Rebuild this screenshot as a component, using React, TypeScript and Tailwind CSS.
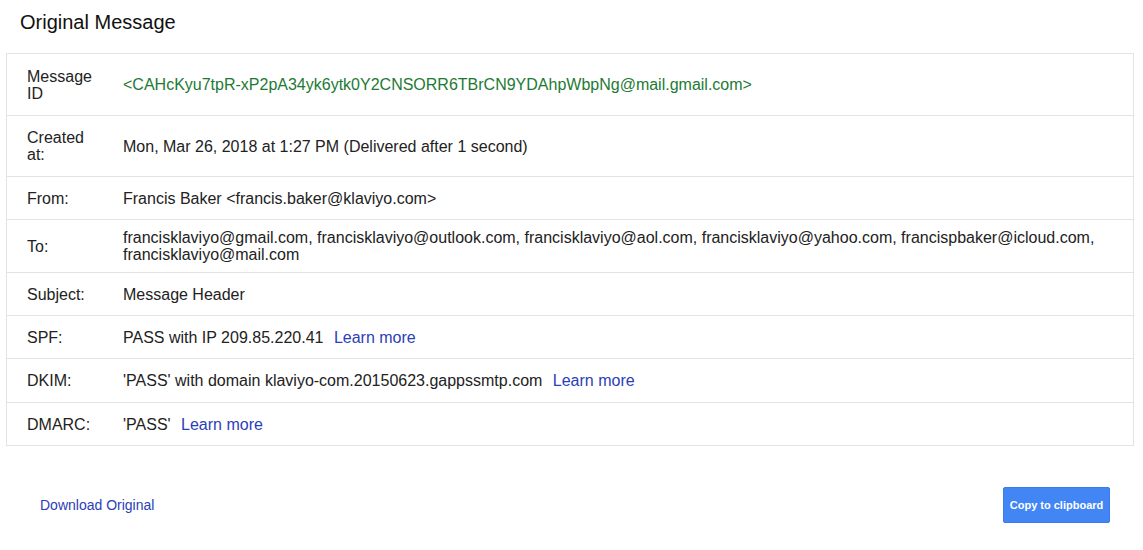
function Learn() {
  return <a href="#" className="ml-[6px] text-[#2b40b8]">Learn more</a>;
}

export default function App() {
  const data = [
    {
      label: "Message ID",
      h: "h-[62px]",
      value: <span className="text-[#1d7a34]">&lt;CAHcKyu7tpR-xP2pA34yk6ytk0Y2CNSORR6TBrCN9YDAhpWbpNg@mail.gmail.com&gt;</span>,
    },
    { label: "Created at:", h: "h-[61px]", value: "Mon, Mar 26, 2018 at 1:27 PM (Delivered after 1 second)" },
    { label: "From:", h: "h-[43px]", value: "Francis Baker <francis.baker@klaviyo.com>" },
    {
      label: "To:",
      h: "h-[53px]",
      value:
        "francisklaviyo@gmail.com, francisklaviyo@outlook.com, francisklaviyo@aol.com, francisklaviyo@yahoo.com, francispbaker@icloud.com, francisklaviyo@mail.com",
    },
    { label: "Subject:", h: "h-[43px]", value: "Message Header" },
    { label: "SPF:", h: "h-[43px]", value: <>PASS with IP 209.85.220.41 <Learn /></> },
    {
      label: "DKIM:",
      h: "h-[44px]",
      value: <>'PASS' with domain klaviyo-com.20150623.gappssmtp.com <Learn /></>,
    },
    { label: "DMARC:", h: "h-[43px]", value: <>'PASS' <Learn /></> },
  ];

  return (
    <div className="w-[1143px] h-[550px] bg-white text-[#222] overflow-hidden" style={{ fontFamily: "'Liberation Sans', Arial, sans-serif" }}>
      {/* Title */}
      <div className="pl-[20px] pt-[10px] h-[53px]">
        <h1 className="text-[20px] leading-[24px] text-[#111]">Original Message</h1>
      </div>

      {/* Header table */}
      <div className="ml-[6px] w-[1128px] border-t border-l border-r border-[#e3e3e3]">
        {data.map((r) => (
          <div key={r.label} className={`flex items-center border-b border-[#e3e3e3] text-[16px] leading-[17px] ${r.h}`}>
            <div className="w-[116px] shrink-0 pl-[20px] pr-[28px]">{r.label}</div>
            <div className="flex-1 pr-[20px]">{r.value}</div>
          </div>
        ))}
      </div>

      {/* Footer actions */}
      <div className="flex items-center justify-between pl-[40px] pr-[33px] mt-[41px]">
        <a href="#" className="text-[14px] text-[#2b40b8]">Download Original</a>
        <button className="h-[36px] w-[107px] rounded-[2px] bg-[#4285f4] border border-[#3b7ae9] text-white text-[11px] font-bold">
          Copy to clipboard
        </button>
      </div>
    </div>
  );
}
